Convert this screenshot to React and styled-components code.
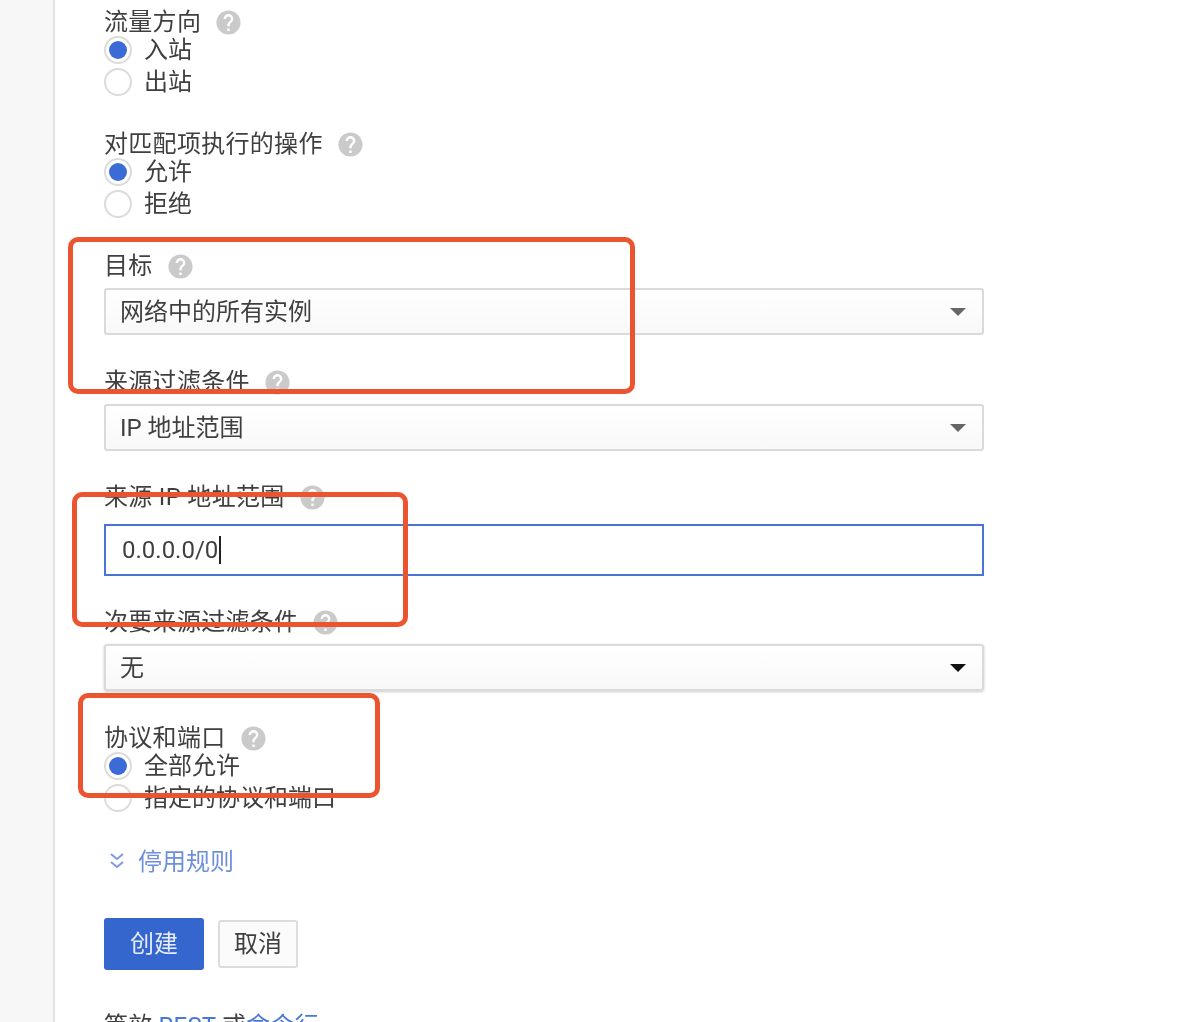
import React from "react";
import styled, { createGlobalStyle } from "styled-components";
import { MdHelp } from "react-icons/md";

const GlobalStyle = createGlobalStyle`
  html, body {
    margin: 0;
    height: 1022px;
    overflow: hidden;
    background: #fff;
  }
  * {
    box-sizing: border-box;
  }
`;

const Field = ({ label, top, children }) => (
  <Section $top={top}>
    <Label>
      {label}
      <HelpIcon size={29} />
    </Label>
    {children}
  </Section>
);

const Radio = ({ checked, children }) => (
  <RadioRow>
    <RadioCircle $checked={checked} />
    <RaisedText>{children}</RaisedText>
  </RadioRow>
);

const App = () => {
  return (
    <Page>
      <GlobalStyle />
      <Sidebar />
      <Form>
        <Field label="流量方向" top={8}>
          <Radio checked>入站</Radio>
          <Radio>出站</Radio>
        </Field>
        <Field label="对匹配项执行的操作" top={32}>
          <Radio checked>允许</Radio>
          <Radio>拒绝</Radio>
        </Field>
        <Field label="目标" top={32}>
          <Select>
            <SelectText>网络中的所有实例</SelectText>
            <Arrow />
          </Select>
        </Field>
        <Field label="来源过滤条件" top={33}>
          <Select>
            <SelectText>IP 地址范围</SelectText>
            <Arrow />
          </Select>
        </Field>
        <Field label="来源 IP 地址范围" top={32}>
          <InputBox>
            0.0.0.0/0
            <Caret />
          </InputBox>
        </Field>
        <Field label="次要来源过滤条件" top={32}>
          <Select $raised>
            <SelectText>无</SelectText>
            <Arrow $dark />
          </Select>
        </Field>
        <Field label="协议和端口" top={33}>
          <Radio checked>全部允许</Radio>
          <Radio>指定的协议和端口</Radio>
        </Field>
        <DisableLink>
          <svg width="16" height="20" viewBox="0 0 16 20" fill="none" stroke="#7d9be0" strokeWidth="2">
            <path d="M2 3l6 5 6-5" />
            <path d="M2 11l6 5 6-5" />
          </svg>
          <SelectText>停用规则</SelectText>
        </DisableLink>
        <Actions>
          <PrimaryButton>
            <RaisedText>创建</RaisedText>
          </PrimaryButton>
          <CancelButton>
            <RaisedText>取消</RaisedText>
          </CancelButton>
        </Actions>
        <Footer>
          等效 <a>REST</a> 或<a>命令行</a>
        </Footer>
      </Form>
      <Callout $left={68} $top={237} $width={567} $height={157} />
      <Callout $left={72} $top={492} $width={336} $height={135} />
      <Callout $left={78} $top={693} $width={302} $height={105} />
    </Page>
  );
};

const Page = styled.div`
  position: relative;
  display: flex;
  width: 1190px;
  height: 1022px;
  overflow: hidden;
  font-family: Roboto, "Noto Sans CJK SC", sans-serif;
  font-size: 24px;
  color: #3f3f3f;
  background: #fff;
`;
const Sidebar = styled.div`
  width: 55px;
  flex-shrink: 0;
  background: #f7f7f7;
  border-right: 2px solid #e4e4e4;
`;
const Form = styled.div`
  width: 929px;
  padding-left: 49px;
  filter: blur(0.6px);
`;
const Section = styled.div`
  margin-top: ${(props) => props.$top}px;
`;
const Label = styled.div`
  display: flex;
  align-items: center;
  height: 26px;
  padding-top: 2px;
  line-height: 26px;
  letter-spacing: 0.3px;
  white-space: pre;
`;
const HelpIcon = styled(MdHelp)`
  margin-left: 13px;
  color: #cacaca;
`;
const RadioRow = styled.div`
  display: flex;
  align-items: center;
  gap: 12px;
  height: 32px;
`;
const RadioCircle = styled.span`
  display: flex;
  align-items: center;
  justify-content: center;
  width: 28px;
  height: 28px;
  border: 2px solid #dcdcdc;
  border-radius: 50%;
  &::after {
    content: "";
    width: 18px;
    height: 18px;
    border-radius: 50%;
    background: ${(props) => (props.$checked ? "#3b6bd6" : "transparent")};
  }
`;
const RaisedText = styled.span`
  padding-bottom: 6px;
`;
const SelectText = styled.span`
  padding-bottom: 4px;
`;
const Select = styled.div`
  display: flex;
  align-items: center;
  justify-content: space-between;
  height: 47px;
  margin-top: 10px;
  padding: 0 16px 0 14px;
  border: 2px solid #dadada;
  border-radius: 3px;
  background: linear-gradient(#fff, #f8f8f8);
  box-shadow: ${(props) => (props.$raised ? "0 1px 3px rgba(0, 0, 0, 0.2)" : "none")};
`;
const Arrow = styled.span`
  width: 0;
  height: 0;
  border-left: 8px solid transparent;
  border-right: 8px solid transparent;
  border-top: 8px solid ${(props) => (props.$dark ? "#111" : "#666")};
`;
const InputBox = styled.div`
  display: flex;
  align-items: center;
  height: 52px;
  margin-top: 15px;
  padding-left: 16px;
  border: 2px solid #4a74d6;
`;
const Caret = styled.span`
  width: 2px;
  height: 28px;
  margin-left: 1px;
  background: #222;
`;
const DisableLink = styled.div`
  display: flex;
  align-items: center;
  gap: 13px;
  height: 28px;
  margin-top: 33px;
  padding-left: 5px;
  color: #6e8fdc;
`;
const Actions = styled.div`
  display: flex;
  align-items: center;
  gap: 14px;
  margin-top: 43px;
`;
const PrimaryButton = styled.div`
  display: flex;
  align-items: center;
  justify-content: center;
  width: 100px;
  height: 52px;
  border-radius: 3px;
  background: #3566ce;
  color: #e6ecfa;
`;
const CancelButton = styled.div`
  display: flex;
  align-items: center;
  justify-content: center;
  width: 80px;
  height: 48px;
  border: 2px solid #dcdcdc;
  border-radius: 3px;
  background: #fbfbfb;
`;
const Footer = styled.div`
  margin-top: 42px;
  line-height: 28px;
  letter-spacing: 0.2px;
  white-space: pre;
  a {
    color: #4a78d8;
  }
`;
const Callout = styled.div`
  position: absolute;
  left: ${(props) => props.$left}px;
  top: ${(props) => props.$top}px;
  width: ${(props) => props.$width}px;
  height: ${(props) => props.$height}px;
  border: 5px solid #ea5530;
  border-radius: 10px;
`;

export default App;
